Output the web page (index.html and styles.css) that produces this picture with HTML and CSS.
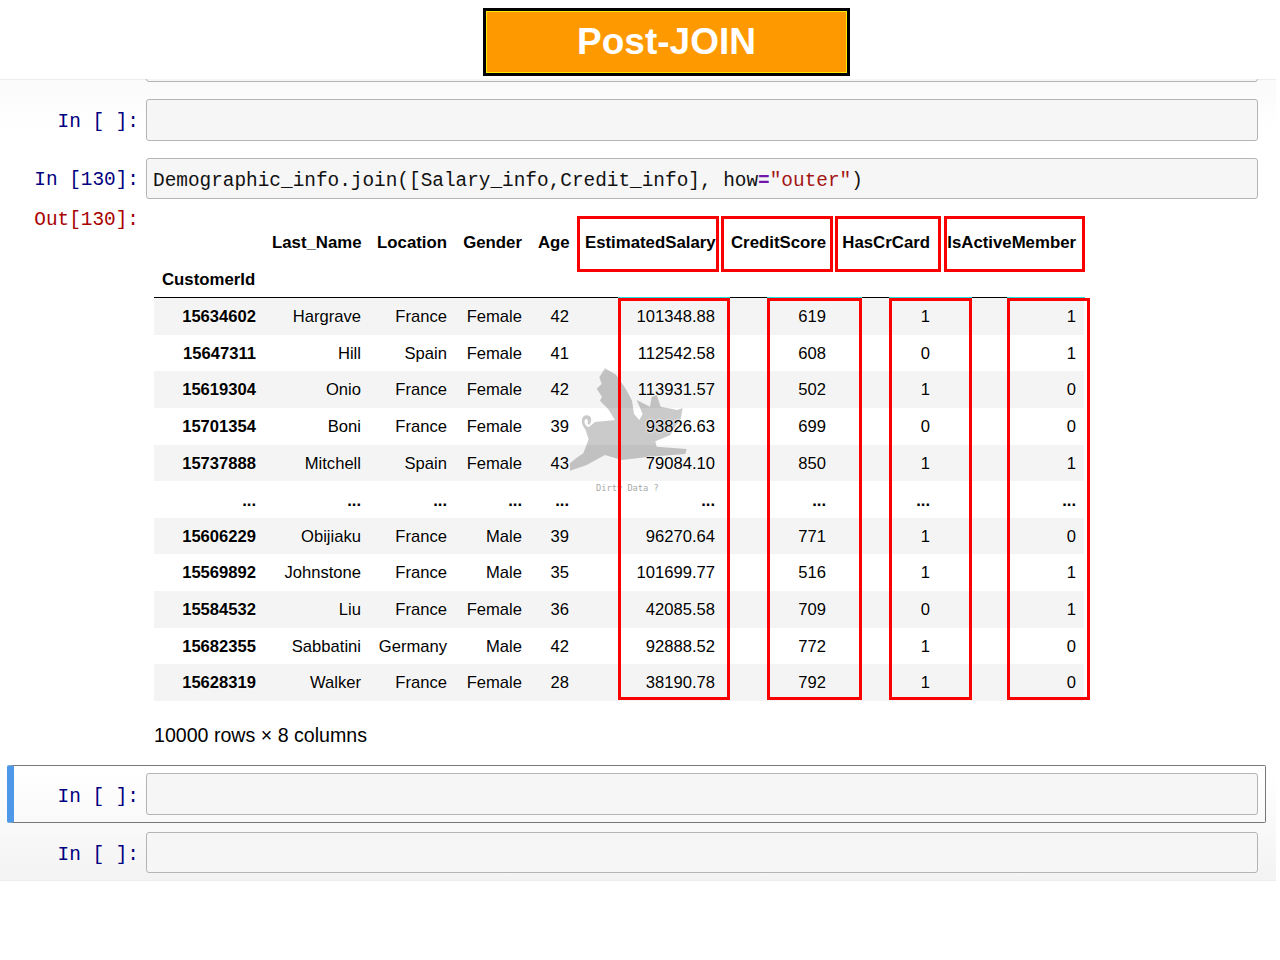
FILE: index.html
```html
<!DOCTYPE html>
<html lang="en">
<head>
<meta charset="utf-8">
<title>Post-JOIN</title>
<link rel="stylesheet" href="styles.css">
</head>
<body>
<header class="banner-bar"><h1 class="banner">Post-JOIN</h1></header>
<main class="notebook">
  <div class="cell cell-cut"><div class="prompt"></div><div class="input"></div></div>
  <div class="cell cell-a"><div class="prompt">In [ ]:</div><div class="input"></div></div>
  <div class="cell cell-b"><div class="prompt">In [130]:</div><div class="input code">Demographic_info.join([Salary_info,Credit_info], how<span class="op">=</span><span class="str">"outer"</span>)</div></div>
  <div class="cell cell-out">
    <div class="prompt out">Out[130]:</div>
    <div class="output">
      <div class="table-wrap">
        <svg class="pig" viewBox="0 0 600 480" aria-hidden="true"><path d="M90 362L90 340L112 322L130 310L146 268L136 238C122 222 122 198 138 196C152 194 158 208 150 222C146 226 140 222 144 214L141 206C130 206 130 224 146 232L165 216L225 210L205 178L180 152L186 140L170 116L185 102L178 82L195 55L228 74L258 118L276 152L282 192L298 210L308 192L290 150L330 170L335 142L350 134L362 170L412 180L428 174L422 206L390 256L346 274L350 290L440 297L436 312L330 320L245 330L195 315L140 345Z"/></svg>
        <div class="pig-label">Dirty Data ?</div>
        <table class="frame">
          <thead>
            <tr><th></th><th>Last_Name</th><th>Location</th><th>Gender</th><th>Age</th><th>EstimatedSalary</th><th>CreditScore</th><th>HasCrCard</th><th>IsActiveMember</th></tr>
            <tr class="names"><th class="idx-name">CustomerId</th><th></th><th></th><th></th><th></th><th></th><th></th><th></th><th></th></tr>
          </thead>
          <tbody>
            <tr><th>15634602</th><td>Hargrave</td><td>France</td><td>Female</td><td>42</td><td>101348.88</td><td>619</td><td>1</td><td>1</td></tr>
            <tr><th>15647311</th><td>Hill</td><td>Spain</td><td>Female</td><td>41</td><td>112542.58</td><td>608</td><td>0</td><td>1</td></tr>
            <tr><th>15619304</th><td>Onio</td><td>France</td><td>Female</td><td>42</td><td>113931.57</td><td>502</td><td>1</td><td>0</td></tr>
            <tr><th>15701354</th><td>Boni</td><td>France</td><td>Female</td><td>39</td><td>93826.63</td><td>699</td><td>0</td><td>0</td></tr>
            <tr><th>15737888</th><td>Mitchell</td><td>Spain</td><td>Female</td><td>43</td><td>79084.10</td><td>850</td><td>1</td><td>1</td></tr>
            <tr class="gap"><th>...</th><td>...</td><td>...</td><td>...</td><td>...</td><td>...</td><td>...</td><td>...</td><td>...</td></tr>
            <tr><th>15606229</th><td>Obijiaku</td><td>France</td><td>Male</td><td>39</td><td>96270.64</td><td>771</td><td>1</td><td>0</td></tr>
            <tr><th>15569892</th><td>Johnstone</td><td>France</td><td>Male</td><td>35</td><td>101699.77</td><td>516</td><td>1</td><td>1</td></tr>
            <tr><th>15584532</th><td>Liu</td><td>France</td><td>Female</td><td>36</td><td>42085.58</td><td>709</td><td>0</td><td>1</td></tr>
            <tr><th>15682355</th><td>Sabbatini</td><td>Germany</td><td>Male</td><td>42</td><td>92888.52</td><td>772</td><td>1</td><td>0</td></tr>
            <tr><th>15628319</th><td>Walker</td><td>France</td><td>Female</td><td>28</td><td>38190.78</td><td>792</td><td>1</td><td>0</td></tr>
          </tbody>
        </table>
        <div class="mark head h1"></div>
        <div class="mark head h2"></div>
        <div class="mark head h3"></div>
        <div class="mark head h4"></div>
        <div class="mark col c1"></div>
        <div class="mark col c2"></div>
        <div class="mark col c3"></div>
        <div class="mark col c4"></div>
      </div>
      <p class="shape">10000 rows × 8 columns</p>
    </div>
  </div>
  <div class="cell cell-selected"><div class="prompt">In [ ]:</div><div class="input"></div></div>
  <div class="cell cell-last"><div class="prompt">In [ ]:</div><div class="input"></div></div>
</main>
</body>
</html>
```
FILE: styles.css
```css
* { box-sizing: border-box; }
html, body { margin: 0; padding: 0; background: #fff; }
body { height: 960px; overflow: hidden; font-family: "Liberation Sans", Arial, sans-serif; color: #000; }

.banner-bar {
  position: relative;
  z-index: 5;
  height: 79px;
  padding: 8px 0 0 483px;
  background: #fff;
}
.banner {
  width: 367px;
  height: 68px;
  margin: 0;
  border: 3px solid #000;
  outline: 1px solid #ffe900;
  outline-offset: -4px;
  background: #ff9900;
  color: #fff;
  font-size: 37px;
  font-weight: 700;
  line-height: 62px;
  text-align: center;
}

.notebook {
  height: 802px;
  padding-top: 0;
  border-top: 1px solid #ececec;
  border-bottom: 1px solid #ececec;
  width: 1276px;
  background: linear-gradient(#fafafa 0, #fff 50px, #fff 690px, #f3f3f3 800px);
}

.cell { display: flex; margin-left: 7px; width: 1259px; padding: 0 8px 0 7px; }
.prompt {
  width: 132px;
  flex: none;
  padding-right: 7px;
  text-align: right;
  font: 19.4px/46px "Liberation Mono", "DejaVu Sans Mono", monospace;
  color: #000080;
  white-space: pre;
}
.prompt.out { color: #a80000; line-height: 40px; }
.input {
  flex: 1;
  height: 42px;
  border: 1px solid #b4b4b4;
  border-radius: 3px;
  background: #f6f6f6;
}
.code {
  padding-left: 6px;
  font: 19.4px/44px "Liberation Mono", "DejaVu Sans Mono", monospace;
  color: #111;
  white-space: pre;
}
.op { color: #7216ab; font-weight: 700; }
.str { color: #a31515; }

.cell-cut { height: 1px; }
.cell-cut .input { height: 21px; margin-top: -19px; background: #f6f6f6; }
.cell-a { margin-top: 18px; height: 42px; }
.cell-b { margin-top: 17px; height: 42px; }
.cell-b .input { height: 41px; }
.cell-b .prompt { line-height: 44px; }
.cell-out { margin-top: 0; height: 565px; }
.cell-selected {
  height: 58px;
  padding: 7px 7px 0 0;
  border: 1px solid #777;
  border-left: 7px solid #4f97e8;
  border-radius: 2px;
}
.cell-selected .prompt { line-height: 48px; }
.cell-last { margin-top: 9px; height: 41px; }
.cell-last .input { height: 41px; }

.output { flex: 1; padding: 25px 0 0 8px; }
.table-wrap { position: relative; width: 930px; height: 477px; }
.frame { display: block; position: relative; z-index: 1; border-collapse: collapse; font-size: 16.6px; }
.frame thead, .frame tbody { display: block; }
.frame thead { font-size: 16.8px; }
.frame tr {
  display: grid;
  grid-template-columns: 110px 105px 86px 75px 47px 146px 111px 104px 146px;
  height: 36.64px;
}
.frame thead tr { height: 37px; }
.frame thead tr.names { height: 36px; border-bottom: 1px solid #000; }
.frame th, .frame td {
  padding: 0 8px;
  text-align: right;
  line-height: 36.64px;
  white-space: nowrap;
  text-shadow: 0 0 2px #fff, 0 0 2px #fff;
}
.frame tbody th, .frame tbody td { padding-top: 1px; }
.frame .gap th, .frame .gap td { font-weight: 700; padding-top: 2px; }
.frame th.idx-name { text-align: left; }
.frame tbody tr:nth-child(odd) { background: rgba(0, 0, 0, .042); }

.pig { position: absolute; left: 386px; top: 125px; width: 200px; height: 160px; fill: #cacaca; }
.pig-label {
  position: absolute;
  left: 442px;
  top: 257px;
  font: 8.7px/12px "DejaVu Sans Mono", monospace;
  color: #a8a8a8;
  white-space: pre;
}

.mark { position: absolute; z-index: 2; border: 3px solid #fb0000; }
.head { top: -9px; height: 56px; }
.h1 { left: 423px; width: 142px; }
.h2 { left: 567px; width: 112px; }
.h3 { left: 681px; width: 106px; }
.h4 { left: 790px; width: 141px; }
.col { top: 73px; height: 402px; }
.col::before {
  content: "";
  position: absolute;
  left: -3px;
  right: -3px;
  top: -4px;
  height: 1px;
  background: #1fe0e0;
}
.c1 { left: 464px; width: 112px; }
.c2 { left: 613px; width: 95px; }
.c3 { left: 735px; width: 83px; }
.c4 { left: 853px; width: 83px; }
.c4::before { right: 2px; }

.shape { margin: 21px 0 0; font-size: 19.6px; line-height: 24px; white-space: nowrap; }
```
